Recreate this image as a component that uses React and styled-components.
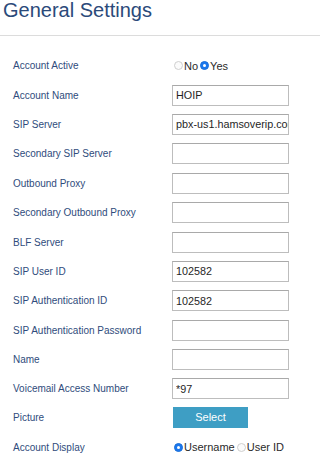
import React from "react";
import styled, { createGlobalStyle } from "styled-components";

const GlobalStyle = createGlobalStyle`
  html, body {
    margin: 0;
    padding: 0;
    background: #ffffff;
    font-family: "Liberation Sans", Arial, sans-serif;
  }
`;

const Page = styled.div`
  width: 320px;
  height: 462px;
  overflow: hidden;
  background: #ffffff;
`;

const Title = styled.h1`
  margin: 0;
  padding: 0 0 0 3px;
  height: 35px;
  font-size: 20px;
  line-height: 20px;
  font-weight: normal;
  color: #2b4a7a;
`;

const Divider = styled.div`
  height: 1px;
  background: #dcdcdc;
`;

const Form = styled.div`
  padding: 15px 0 0 13px;
  display: flex;
  flex-direction: column;
`;

const Row = styled.div`
  display: grid;
  grid-template-columns: 159px 1fr;
  align-items: center;
  height: ${(p) => p.h || 29.4}px;
`;

const Label = styled.div`
  font-size: 10px;
  color: #2f4c7c;
  white-space: nowrap;
`;

const TextInput = styled.input`
  box-sizing: border-box;
  width: 117px;
  height: 21px;
  margin: 0;
  padding: 0 0 0 3px;
  border: 1px solid #bdbdbd;
  border-top-color: #a9a9a9;
  border-radius: 0;
  background: #ffffff;
  font-family: "Liberation Sans", Arial, sans-serif;
  font-size: 10.8px;
  color: #1f1f1f;
  outline: none;
`;

const Radios = styled.div`
  display: flex;
  align-items: center;
  padding-left: 2px;
  font-size: 11px;
  color: #2a2a2a;
`;

const RadioItem = styled.label`
  display: flex;
  align-items: center;
  margin-right: 2px;
`;

const Dot = styled.span`
  box-sizing: border-box;
  width: 9px;
  height: 9px;
  border-radius: 50%;
  margin-right: 1px;
  display: inline-flex;
  align-items: center;
  justify-content: center;
  background: ${(p) => (p.checked ? "#1b78ee" : "#fbfbfb")};
  border: 1px solid ${(p) => (p.checked ? "#1b6fd8" : "#cfcfcf")};

  &::after {
    content: "";
    width: 3px;
    height: 3px;
    border-radius: 50%;
    background: #ffffff;
    display: ${(p) => (p.checked ? "block" : "none")};
  }
`;

const SelectButton = styled.button`
  width: 75px;
  height: 21px;
  margin: 0 0 0 1px;
  padding: 0;
  border: none;
  background: #3e9ec4;
  color: #ffffff;
  font-family: "Liberation Sans", Arial, sans-serif;
  font-size: 11px;
  cursor: pointer;
`;

function Radio({ checked, children }) {
  return (
    <RadioItem>
      <Dot checked={checked} />
      {children}
    </RadioItem>
  );
}

const fields = [
  { label: "Account Name", value: "HOIP" },
  { label: "SIP Server", value: "pbx-us1.hamsoverip.com" },
  { label: "Secondary SIP Server", value: "" },
  { label: "Outbound Proxy", value: "" },
  { label: "Secondary Outbound Proxy", value: "" },
  { label: "BLF Server", value: "" },
  { label: "SIP User ID", value: "102582" },
  { label: "SIP Authentication ID", value: "102582" },
  { label: "SIP Authentication Password", value: "" },
  { label: "Name", value: "" },
  { label: "Voicemail Access Number", value: "*97" },
];

export default function App() {
  return (
    <Page>
      <GlobalStyle />
      <Title>General Settings</Title>
      <Divider />
      <Form>
        <Row>
          <Label>Account Active</Label>
          <Radios>
            <Radio>No</Radio>
            <Radio checked>Yes</Radio>
          </Radios>
        </Row>
        {fields.map((f) => (
          <Row key={f.label}>
            <Label>{f.label}</Label>
            <TextInput type="text" defaultValue={f.value} />
          </Row>
        ))}
        <Row h={27}>
          <Label>Picture</Label>
          <div>
            <SelectButton>Select</SelectButton>
          </div>
        </Row>
        <Row h={33}>
          <Label>Account Display</Label>
          <Radios>
            <Radio checked>Username</Radio>
            <Radio>User ID</Radio>
          </Radios>
        </Row>
      </Form>
    </Page>
  );
}
